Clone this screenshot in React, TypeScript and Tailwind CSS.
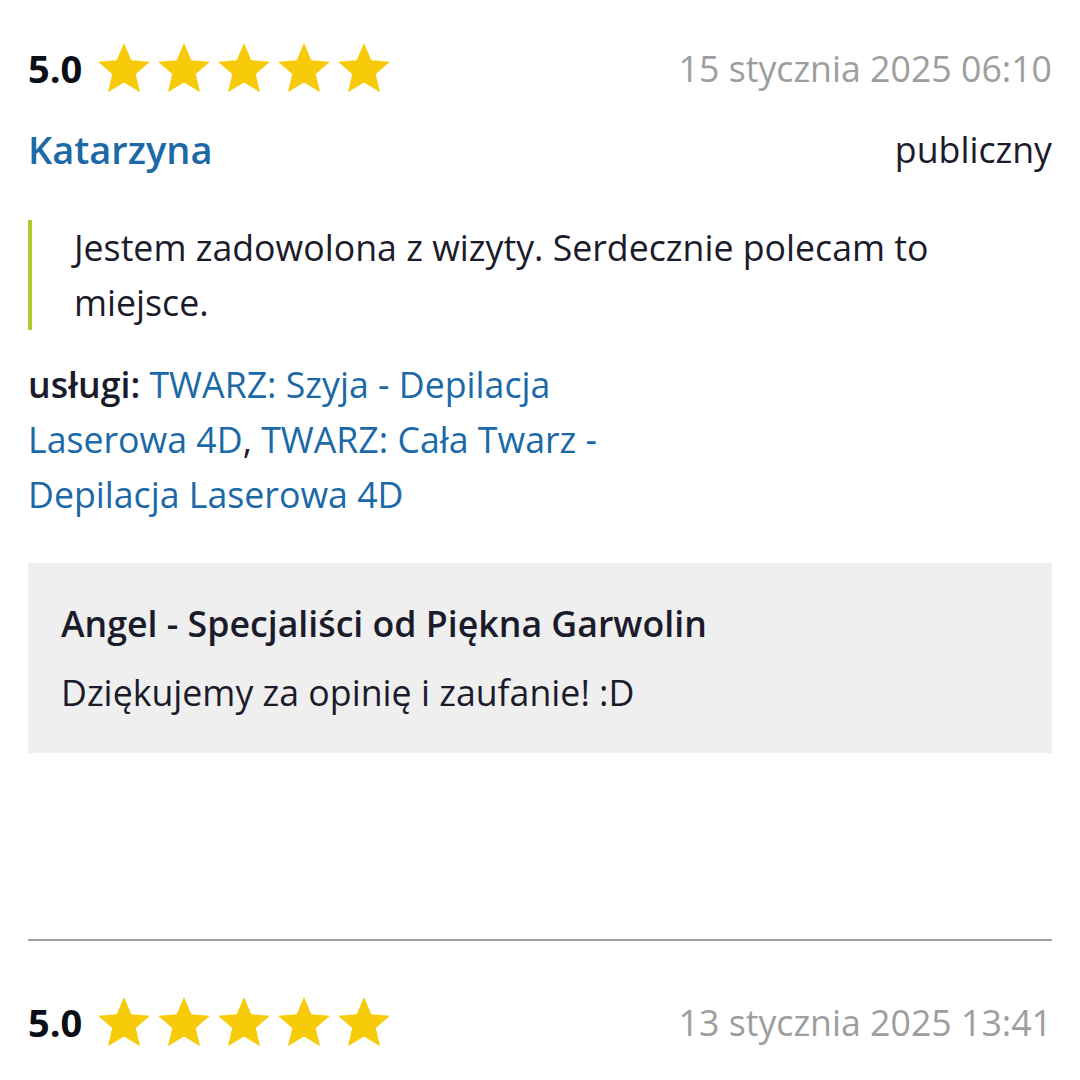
const Star = () => (
  <svg viewBox="2 2 20 19.27" className="w-[52px] h-[50px]" fill="#f8cb0a">
    <path d="M12 17.27L18.18 21l-1.64-7.03L22 9.24l-7.19-.61L12 2 9.19 8.63 2 9.24l5.46 4.73L5.82 21z" />
  </svg>
);

const RatingRow = ({ date }: { date: string }) => (
  <div className="flex items-center justify-between h-[56px]">
    <div className="flex items-center">
      <span className="text-[38px] font-bold text-[#0b0d17] mr-[16px]">5.0</span>
      <div className="flex gap-[8px]">
        {[0, 1, 2, 3, 4].map((i) => (
          <Star key={i} />
        ))}
      </div>
    </div>
    <span className="text-[35.7px] text-[#9e9e9e]">{date}</span>
  </div>
);

export default function App() {
  return (
    <div
      className="w-[1080px] h-[1080px] overflow-hidden bg-white px-[28px] pt-[40px] text-[#1b1b2b] text-[35.7px] leading-[55px]"
      style={{ fontFamily: '"Open Sans", sans-serif' }}
    >
      <RatingRow date="15 stycznia 2025 06:10" />

      <div className="flex items-center justify-between mt-[26px]">
        <span className="text-[38px] font-semibold text-[#1b69a7]">Katarzyna</span>
        <span>publiczny</span>
      </div>

      <blockquote className="mt-[43px] border-l-[4px] border-[#b6c72a] pl-[42px] pr-[40px]">
        Jestem zadowolona z wizyty. Serdecznie polecam to miejsce.
      </blockquote>

      <div className="mt-[27px] w-[620px]">
        <span className="font-semibold">usługi: </span>
        <a className="text-[#1b69a7]">TWARZ: Szyja - Depilacja Laserowa 4D</a>,{' '}
        <a className="text-[#1b69a7]">TWARZ: Cała Twarz - Depilacja Laserowa 4D</a>
      </div>

      <div className="mt-[41px] bg-[#efefef] px-[33px] pt-[33px] pb-[33px]">
        <div className="font-semibold">Angel - Specjaliści od Piękna Garwolin</div>
        <div className="mt-[14px]">Dziękujemy za opinię i zaufanie! :D</div>
      </div>

      <hr className="mt-[186px] border-0 h-[2px] bg-[#a0a0a0]" />

      <div className="mt-[53px]">
        <RatingRow date="13 stycznia 2025 13:41" />
      </div>
    </div>
  );
}
